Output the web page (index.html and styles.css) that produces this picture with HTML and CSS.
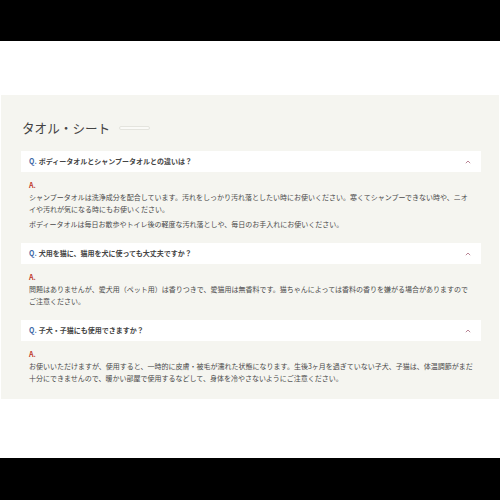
FILE: index.html
```html
<!DOCTYPE html>
<html lang="ja">
<head>
<meta charset="utf-8">
<link rel="stylesheet" href="styles.css">
</head>
<body>
<div class="page">
  <section class="faq">
    <h2 class="faq-title">タオル・シート<span class="title-bar"></span></h2>
    <div class="item">
      <div class="q"><span class="q-mark">Q.</span> ボディータオルとシャンプータオルとの違いは？<svg class="chev" viewBox="0 0 6 4" width="6" height="4"><polyline points="0.8,3.2 3,1 5.2,3.2" fill="none" stroke="#b98595" stroke-width="1"/></svg></div>
      <div class="a">
        <div class="a-mark">A.</div>
        <p>シャンプータオルは洗浄成分を配合しています。汚れをしっかり汚れ落としたい時にお使いください。寒くてシャンプーできない時や、ニオイや汚れが気になる時にもお使いください。</p>
        <p class="p2">ボディータオルは毎日お散歩やトイレ後の軽度な汚れ落としや、毎日のお手入れにお使いください。</p>
      </div>
    </div>
    <div class="item">
      <div class="q"><span class="q-mark">Q.</span> 犬用を猫に、猫用を犬に使っても大丈夫ですか？<svg class="chev" viewBox="0 0 6 4" width="6" height="4"><polyline points="0.8,3.2 3,1 5.2,3.2" fill="none" stroke="#b98595" stroke-width="1"/></svg></div>
      <div class="a">
        <div class="a-mark">A.</div>
        <p>問題はありませんが、愛犬用（ペット用）は香りつきで、愛猫用は無香料です。猫ちゃんによっては香料の香りを嫌がる場合がありますのでご注意ください。</p>
      </div>
    </div>
    <div class="item">
      <div class="q"><span class="q-mark">Q.</span> 子犬・子猫にも使用できますか？<svg class="chev" viewBox="0 0 6 4" width="6" height="4"><polyline points="0.8,3.2 3,1 5.2,3.2" fill="none" stroke="#b98595" stroke-width="1"/></svg></div>
      <div class="a">
        <div class="a-mark">A.</div>
        <p>お使いいただけますが、使用すると、一時的に皮膚・被毛が濡れた状態になります。生後3ヶ月を過ぎていない子犬、子猫は、体温調節がまだ十分にできませんので、暖かい部屋で使用するなどして、身体を冷やさないようにご注意ください。</p>
      </div>
    </div>
  </section>
</div>
</body>
</html>
```

FILE: styles.css
```css
html, body {
  margin: 0;
  padding: 0;
  background: #000;
}
body {
  font-family: "Noto Sans CJK JP", "Noto Sans", sans-serif;
  color: #4a4a4a;
}
.page {
  margin-top: 41px;
  height: 417px;
  padding-top: 54px;
  box-sizing: border-box;
  background: #fff;
}
.faq {
  margin: 0 1px;
  padding: 24px 18px 2px 20px;
  background: #f5f5f0;
}
.faq-title {
  margin: 0 0 14px 1px;
  font-size: 12.6px;
  line-height: 18px;
  font-weight: 400;
  color: #444;
  display: flex;
  align-items: center;
}
.title-bar {
  display: inline-block;
  width: 29px;
  height: 2px;
  margin-left: 9px;
  border: 1px solid #e4e4de;
  border-radius: 2px;
  background: #fafaf7;
}
.item {
  display: flex;
  flex-direction: column;
}
.q {
  background: #fff;
  padding: 5px 10px 5px 8px;
  font-size: 7px;
  line-height: 11px;
  font-weight: 700;
  color: #444;
  display: flex;
  align-items: center;
}
.q-mark {
  color: #3e6aa8;
  margin-right: 2px;
}
.chev {
  margin-left: auto;
}
.a {
  padding: 7px 6.5px 13px 8px;
  font-size: 7px;
  line-height: 12px;
}
.a-mark {
  color: #c0392b;
  font-weight: 700;
}
.a p {
  margin: 0;
}
.a .p2 {
  margin-top: 3px;
}
```
